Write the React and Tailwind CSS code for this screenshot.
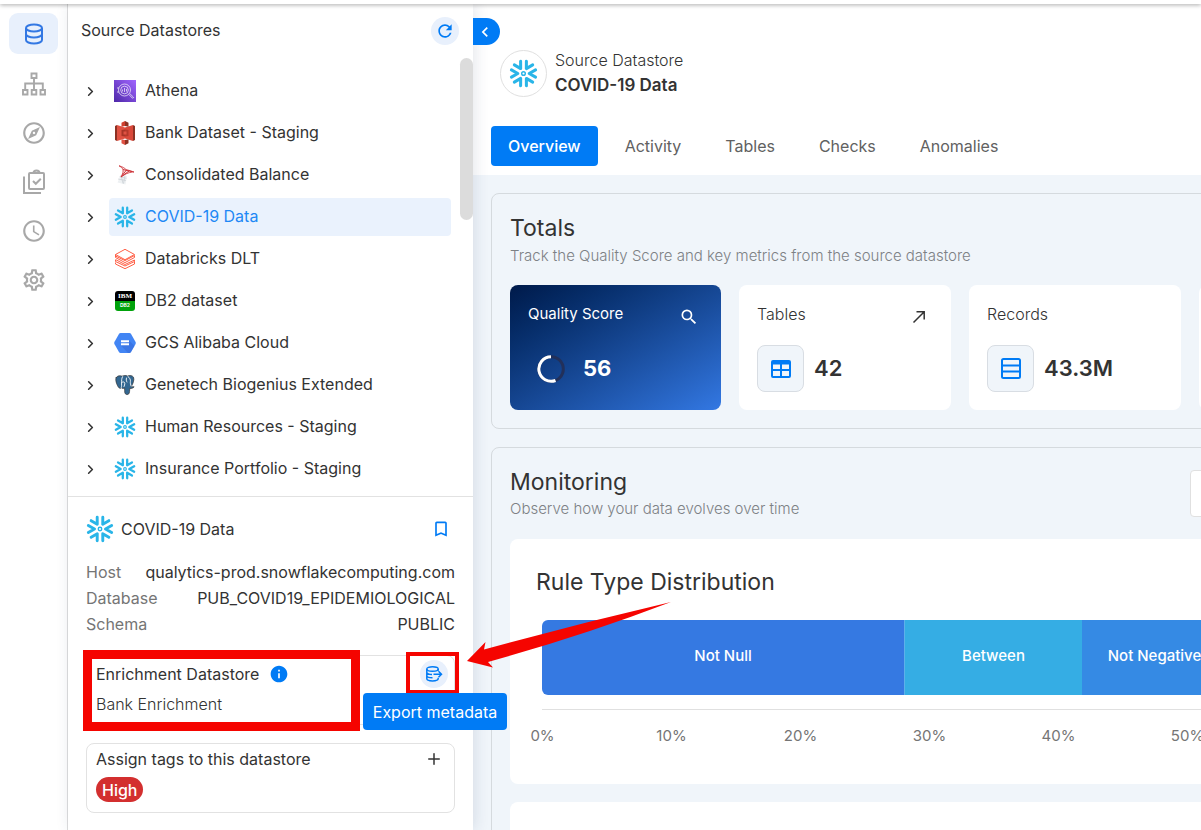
import {
  MdChevronLeft, MdRefresh, MdBookmarkBorder, MdInfo, MdSearch,
  MdOutlineExplore, MdOutlineWatchLater, MdOutlineSettings,
} from 'react-icons/md';
import { ChevronRight, Plus } from 'lucide-react';
import clsx from 'clsx';

function Snowflake({ className }) {
  return (
    <svg viewBox="0 0 24 24" className={clsx('shrink-0', className)} fill="none" stroke="#29b5e8" strokeWidth="2.5" strokeLinecap="round" strokeLinejoin="round">
      {[0, 60, 120, 180, 240, 300].map(a => (
        <path key={a} d="M2 9 7.3 12 2 15" transform={`rotate(${a} 12 12)`} />
      ))}
      <circle cx="12" cy="12" r="1.5" strokeWidth="1.2" />
    </svg>
  );
}

function AthenaLogo() {
  return (
    <svg viewBox="0 0 22 22" className="size-[22px] shrink-0" fill="none" stroke="#fff">
      <defs>
        <linearGradient id="athena" x1="0" y1="1" x2="1" y2="0">
          <stop offset="0" stopColor="#4d27a8" />
          <stop offset="1" stopColor="#a166ff" />
        </linearGradient>
      </defs>
      <path d="M0 0h22v22H0z" fill="url(#athena)" stroke="none" />
      <g strokeWidth="0.8" opacity="0.85">
        <circle cx="10.5" cy="10" r="6" />
        <circle cx="10.5" cy="10" r="3.8" />
        <path d="M8.5 11.5v-2M10.5 12V8M12.5 11.5V9M3 8h2M3 12h2" />
        <path d="m14.8 14.4 3.4 3.6c.7.7 1.8-.3 1.1-1l-3.6-3.5" />
      </g>
    </svg>
  );
}

function S3Logo() {
  return (
    <svg viewBox="0 0 22 24" className="h-6 w-[22px] shrink-0">
      <path d="M1 5l2-1v16l-2-1z" fill="#8c3123" />
      <path d="M3 4 11 6.500v11L3 20z" fill="#e05243" />
      <path d="M21 5l-2-1v16l2-1z" fill="#8c3123" />
      <path d="M19 4 11 6.500v11l8 2.500z" fill="#d9483a" />
      <path d="M11 0 7.500 1.700v4L11 5z" fill="#d0402f" />
      <path d="m11 0 3.500 1.700v4L11 5z" fill="#8c3123" />
      <path d="m11 24-3.500-1.700v-4L11 19z" fill="#e05243" />
      <path d="m11 24 3.500-1.700v-4L11 19z" fill="#8c3123" />
      <path d="M11 8.500 7.500 9v6l3.500.5z" fill="#a83427" />
      <path d="m11 8.500 3.500.5v6l-3.500.5z" fill="#b5382b" />
      <path d="M9.500 10.500h3v3h-3z" fill="#e05243" />
    </svg>
  );
}

function SqlServerLogo() {
  return (
    <svg viewBox="0 0 22 22" className="size-[22px] shrink-0">
      <path d="M7 10.500 13 12l-1.500 8.500-8-2z" fill="#eef1f3" />
      <path d="M4 15l8 1.500M7 11l2 8.500M11 11.500l-1.500 8M5.500 12.800 12.500 14.300" stroke="#c3cacf" strokeWidth="0.6" fill="none" />
      <path d="M5 1.800c3.600 1 5.600 2.200 7 3.800 2.800.6 5.500 1.400 8 2.400-3.500 0-8 1.200-13 5 1.700-3.200 2.700-5.500 1.800-7.700C8.200 3.800 6.800 2.800 5 1.800z" fill="#fbe9e9" stroke="#c9252b" strokeWidth="0.800" />
      <path d="m9 5.500 9 2.200M8.500 11l4-5M7.500 12.500 15 7" stroke="#c9252b" strokeWidth="0.900" fill="none" />
    </svg>
  );
}

function DatabricksLogo() {
  return (
    <svg viewBox="0 0 22 22" className="size-[22px] shrink-0" fill="none" stroke="#ff5f46" strokeWidth="1" strokeLinejoin="round">
      <path d="M1.500 6.500 11 1.300l9.500 5.200L11 11.700z" />
      <path d="M1.500 6.500v3L11 14.600l9.500-5.100v-2L11 12.600 1.500 8" />
      <path d="M1.500 12v1.500L11 18l9.500-4.500V12L11 16.500 1.500 11.500" />
      <path d="M1.500 14.500V16L11 20.700l9.500-4.700v-2.500" />
    </svg>
  );
}

function Db2Logo() {
  return (
    <div className="mx-px flex size-5 shrink-0 flex-col overflow-hidden rounded-[3px] text-center text-white">
      <span className="h-[10px] bg-black font-['Liberation_Serif',serif] text-[7px] leading-[11px] font-bold">IBM</span>
      <span className="h-[10px] bg-[#00a20b] text-[5px] leading-[8px] font-bold">DB2</span>
    </div>
  );
}

function GcsLogo() {
  return (
    <svg viewBox="0 0 22 20" className="h-5 w-[22px] shrink-0">
      <path d="M6.500 0h9c.6 0 1.100.3 1.400.8l4.700 8.200c.3.600.3 1.300 0 1.900l-4.700 8.300c-.3.500-.8.800-1.400.8h-9c-.6 0-1.100-.3-1.400-.8L.4 10.900c-.3-.6-.3-1.300 0-1.900L5.100.8c.3-.5.800-.8 1.400-.8z" fill="#4285f4" />
      <path d="m15 7.500 5.500 5.500-4 6.500c-.2.300-.6.500-1 .5H14l-7-7.500z" fill="#3367d6" opacity="0.5" />
      <path d="M7 7.300h8v2H7zM7 10.300h8v2H7z" fill="#fff" />
    </svg>
  );
}

function PostgresLogo() {
  return (
    <svg viewBox="0 0 22 22" className="size-[22px] shrink-0" strokeLinejoin="round" strokeLinecap="round">
      <path d="M2.200 3.500C3.500 1.500 6 1.500 8 2.200c2-.9 4-.8 5.500-.2 2-.8 4.800-.7 6 1.200 1 2.400-.4 6.500-2.200 9.300.8.400 2 .2 2.800.3-.5 1.300-2.800 1.900-4.300 1.600-.3 2 .1 4.600-1.400 5.800-1.300.8-3.300.2-3.600-1.500-.3-1.500-.1-3.200-.2-4.700-1.200.7-2.500.6-3.300-.3-.8 1-2 .8-3-.7C2.400 10 1 5.500 2.200 3.500z" fill="#336791" stroke="#333" strokeWidth="0.700" />
      <path d="M7.300 13.500c.6-1.500.1-3 .3-4.800.1-2-.2-4 .9-6M13.800 2.300c2 1.500 2.900 3.500 2.600 5.200-.3 1.800.2 2.800.7 4.500M7.600 8.500c1.500-1 3-.7 3.200.7.100 1.300-.4 2.200-.8 3.300M12.500 4c-.5 1.500-.2 3 .4 4" fill="none" stroke="#fff" strokeWidth="0.900" />
    </svg>
  );
}

function SitemapIcon() {
  return (
    <svg viewBox="0 0 26 24" className="h-6 w-[26px]" fill="none" stroke="currentColor" strokeWidth="1.900">
      <path d="M10.500 1.500h5v4.500h-5zM2 18h4.500v4.500H2zM10.700 18h4.600v4.500h-4.600zM19.500 18H24v4.500h-4.500zM13 6v12M4.200 18v-6.500h17.600V18" />
    </svg>
  );
}

function DatabaseIcon() {
  return (
    <svg viewBox="0 0 20 22" className="h-[22px] w-5" fill="none" stroke="#3378e3" strokeWidth="2">
      <ellipse cx="10" cy="5" rx="8" ry="3.500" />
      <path d="M2 5v12c0 2 3.600 3.500 8 3.500s8-1.500 8-3.500V5M2 11c0 2 3.600 3.500 8 3.500s8-1.500 8-3.500" />
    </svg>
  );
}

function ChecksIcon() {
  return (
    <svg viewBox="0 0 24 26" className="h-[26px] w-6" fill="none" stroke="currentColor" strokeWidth="2">
      <path d="M2 7.500V24h17" />
      <rect x="7" y="4" width="15" height="16" rx="1" />
      <path d="M11.500 4c0-3.500 6-3.500 6 0M11 12l2.800 2.800 5-5" />
    </svg>
  );
}

function ExportIcon() {
  return (
    <svg viewBox="0 0 18 18" className="size-[18px]" fill="none" stroke="currentColor" strokeWidth="1.500">
      <ellipse cx="7.500" cy="4" rx="5.700" ry="2.300" />
      <path d="M1.800 4v9.500c0 1.400 2.500 2.400 5.700 2.400s5.700-1 5.700-2.400v-.8M13.200 4v1.800M1.800 7.200c0 1.300 2.200 2.200 5.200 2.300M1.800 10.500c0 1.300 2.500 2.300 5.700 2.300" />
      <path d="M8.500 9.300h8M13.500 6.300l3 3-3 3" />
    </svg>
  );
}

function OpenIcon() {
  return (
    <svg viewBox="0 0 14 14" className="size-[14px]" fill="none" stroke="currentColor" strokeWidth="1.500">
      <path d="M1.500 12.500 12 2M4.500 1.800h7.700v7.700" />
    </svg>
  );
}

function TableIcon() {
  return (
    <svg viewBox="0 0 20 18" className="h-[18px] w-5" fill="none" stroke="#007bf5" strokeWidth="2">
      <rect x="1" y="1" width="18" height="16" rx="1" />
      <path d="M1 10h18M10 3v14" />
      <path d="M1 3h18" strokeWidth="3" />
    </svg>
  );
}

function RecordsIcon() {
  return (
    <svg viewBox="0 0 20 21" className="h-[21px] w-5" fill="none" stroke="#007bf5" strokeWidth="2">
      <rect x="1" y="1" width="18" height="19" rx="1.500" />
      <path d="M1 7.500h18M1 13.500h18" />
    </svg>
  );
}

const navItems = [
  { label: 'Datastores', icon: <DatabaseIcon />, active: true },
  { label: 'Lineage',    icon: <SitemapIcon /> },
  { label: 'Explore',    icon: <MdOutlineExplore className="size-[26px]" /> },
  { label: 'Checks',     icon: <ChecksIcon /> },
  { label: 'History',    icon: <MdOutlineWatchLater className="size-[26px]" /> },
  { label: 'Settings',   icon: <MdOutlineSettings className="size-[26px]" /> },
];

const datastores = [
  { name: 'Athena',                        logo: <AthenaLogo /> },
  { name: 'Bank Dataset - Staging',        logo: <S3Logo /> },
  { name: 'Consolidated Balance',          logo: <SqlServerLogo /> },
  { name: 'COVID-19 Data',                 logo: <Snowflake className="size-[22px]" />, active: true },
  { name: 'Databricks DLT',                logo: <DatabricksLogo /> },
  { name: 'DB2 dataset',                   logo: <Db2Logo /> },
  { name: 'GCS Alibaba Cloud',             logo: <GcsLogo /> },
  { name: 'Genetech Biogenius Extended',   logo: <PostgresLogo /> },
  { name: 'Human Resources - Staging',     logo: <Snowflake className="size-[22px]" /> },
  { name: 'Insurance Portfolio - Staging', logo: <Snowflake className="size-[22px]" /> },
];

const details = [
  { label: 'Host',     value: 'qualytics-prod.snowflakecomputing.com' },
  { label: 'Database', value: 'PUB_COVID19_EPIDEMIOLOGICAL' },
  { label: 'Schema',   value: 'PUBLIC' },
];

const tabs = ['Overview', 'Activity', 'Tables', 'Checks', 'Anomalies'];

const ticks = ['0%', '10%', '20%', '30%', '40%', '50%'];

function NavRail() {
  return (
    <nav className="flex w-[68px] shrink-0 flex-col items-center gap-2 border-r border-[#dedede] pt-[9px]">
      {navItems.map(n => (
        <button
          key={n.label}
          aria-label={n.label}
          className={clsx(
            'flex h-[41px] w-[49px] items-center justify-center rounded-[9px] text-[#a8a8a8]',
            n.active && 'mb-px bg-[#e8f0fc]'
          )}
        >
          {n.icon}
        </button>
      ))}
    </nav>
  );
}

function DatastorePanel() {
  return (
    <aside className="z-10 flex w-[405px] shrink-0 flex-col bg-white shadow-[2px_0_14px_rgba(30,50,90,0.12)]">
      <div className="flex h-[54px] items-center justify-between pr-[14px] pl-[13px]">
        <h2 className="pb-0.5">Source Datastores</h2>
        <button aria-label="Refresh" className="flex size-7 items-center justify-center rounded-full bg-[#e8f0fc] text-[#007bf5]">
          <MdRefresh className="size-5" />
        </button>
      </div>

      <div className="flex h-[439px] items-start justify-between border-b border-[#e2e2e2] pl-3">
        <ul className="flex flex-1 flex-col gap-1 pt-[14px] pr-[9px]">
          {datastores.map(d => (
            <li key={d.name} className="flex items-center gap-1">
              <button aria-label={`Expand ${d.name}`} className="flex w-[25px] items-center justify-start pl-[3px]">
                <ChevronRight className="size-[15px]" strokeWidth={2.5} />
              </button>
              <button
                className={clsx(
                  'flex h-[38px] flex-1 items-center gap-[9px] rounded-[4px] px-[5px] text-left',
                  d.active && 'bg-[#eaf2fd] text-[#1e88f5]'
                )}
              >
                {d.logo}
                <span className="pb-0.5">{d.name}</span>
              </button>
            </li>
          ))}
        </ul>
        <div className="h-[162px] w-[13px] rounded-full bg-[#dcdcdc]" />
      </div>

      <div className="flex flex-col px-[18px] pt-[18px]">
        <div className="flex items-center gap-[7px]">
          <Snowflake className="size-7" />
          <span className="flex-1">COVID-19 Data</span>
          <button aria-label="Bookmark" className="mr-1 text-[#007bf5]">
            <MdBookmarkBorder className="size-5" />
          </button>
        </div>

        <dl className="mt-4">
          {details.map(d => (
            <div key={d.label} className="flex h-[26px] items-center justify-between">
              <dt className="text-[#757575]">{d.label}</dt>
              <dd>{d.value}</dd>
            </div>
          ))}
        </dl>

        <section className="relative mt-[18px] flex h-[70px] justify-between rounded-lg border border-[#e2e2e2] px-[9px] pt-1">
          <div>
            <div className="flex h-7 items-center gap-[10px]">
              Enrichment Datastore
              <MdInfo className="size-5 text-[#007bf5]" />
            </div>
            <p className="leading-8 font-light">Bank Enrichment</p>
          </div>
          <button aria-label="Export metadata" className="mr-[-3px] flex size-7 items-center justify-center rounded-full bg-[#e8f0fc] text-[#007bf5]">
            <ExportIcon />
          </button>
          <div className="absolute top-[-6px] left-[-4px] h-[81px] w-[277px] border-9 border-[#f50400]" />
          <div className="absolute top-[-4px] right-[-5px] h-[42px] w-[53px] border-4 border-[#f50400]" />
          <div role="tooltip" className="absolute top-[37px] left-[276px] flex h-[37px] w-36 items-center justify-center rounded bg-[#007bf5] whitespace-nowrap text-white">
            Export metadata
          </div>
          <svg viewBox="0 0 206 70" className="absolute top-[-56px] left-[380px] z-20 h-[70px] w-[206px]" fill="#f50400">
            <path d="M204 2 Q110 24 17 49.500L18.500 42 0 61l26 6.500-5-5.500Q115 36 204 2z" />
          </svg>
        </section>

        <section className="mt-[18px] h-[70px] rounded-lg border border-[#e2e2e2] px-[9px] pt-[3px]">
          <div className="flex items-center justify-between">
            Assign tags to this datastore
            <button aria-label="Add tag" className="mr-0.5">
              <Plus className="size-[18px]" strokeWidth={2} />
            </button>
          </div>
          <span className="mt-[6px] inline-flex h-[25px] items-center rounded-full bg-[#d32f2f] px-[6px] font-medium text-white">High</span>
        </section>
      </div>
    </aside>
  );
}

function StatCard({ title, icon, value, action }) {
  return (
    <div className="h-[125px] w-[212px] shrink-0 rounded-lg bg-white px-[18px] pt-[15px]">
      <div className="flex h-7 items-center justify-between">
        <span className="font-light">{title}</span>
        {action}
      </div>
      <div className="mt-[17px] flex items-center gap-[10px]">
        <span className="flex size-[47px] items-center justify-center rounded-lg border border-[#d8dde3] bg-[#f0f5fa]">{icon}</span>
        <span className="text-[22px] font-semibold">{value}</span>
      </div>
    </div>
  );
}

function Totals() {
  return (
    <section className="h-[236px] w-[960px] shrink-0 rounded-lg border border-[#d5dade] px-[18px] pt-[18px]">
      <h2 className="text-[23px] leading-8">Totals</h2>
      <p className="text-[15px] leading-6 font-light text-[#7d8185]">Track the Quality Score and key metrics from the source datastore</p>
      <div className="mt-[17px] flex gap-[18px]">
        <div className="h-[125px] w-[211px] shrink-0 rounded-lg bg-linear-to-br from-[#001a4a] to-[#3378e3] px-[18px] pt-[15px] text-white">
          <div className="flex h-7 items-center justify-between">
            <span className="text-[15px]">Quality Score</span>
            <button aria-label="Quality score details" className="mt-[6px] mr-1">
              <MdSearch className="size-5" stroke="currentColor" />
            </button>
          </div>
          <div className="mt-[17px] flex h-[47px] items-center gap-[18px] pl-[9px]">
            <svg viewBox="0 0 28 28" className="size-7" fill="none" strokeWidth="3">
              <circle cx="14" cy="14" r="12.300" stroke="#22305a" />
              <path d="M14 1.700A12.300 12.300 0 1 0 18.500 25.500" stroke="#fff" />
            </svg>
            <span className="text-[22px] font-bold">56</span>
          </div>
        </div>
        <StatCard title="Tables" icon={<TableIcon />} value="42" action={
          <button aria-label="Open tables" className="mt-[6px] mr-[7px]"><OpenIcon /></button>
        } />
        <StatCard title="Records" icon={<RecordsIcon />} value="43.3M" />
        <StatCard />
      </div>
    </section>
  );
}

function Monitoring() {
  return (
    <section className="w-[960px] shrink-0 rounded-lg border border-[#d5dade] px-[18px] pt-[18px] pb-5">
      <div className="flex items-start justify-between">
        <div>
          <h2 className="text-[23px] leading-8">Monitoring</h2>
          <p className="text-[15px] leading-[22px] font-light text-[#7d8185]">Observe how your data evolves over time</p>
        </div>
        <select aria-label="Timeframe" className="mt-1 h-[47px] w-[242px] appearance-none rounded border border-[#e0e0e0] bg-white" />
      </div>
      <div className="mt-[19px] h-[245px] rounded-lg bg-white px-[26px] pt-[27px]">
        <h3 className="text-[23px] leading-8">Rule Type Distribution</h3>
        <div className="mt-[22px] ml-[6px] flex h-[75px] overflow-hidden rounded-md text-[15px] font-medium text-white">
          <div className="flex w-[362px] shrink-0 items-center justify-center bg-[#3579e2] pb-0.5">Not Null</div>
          <div className="flex w-[178px] shrink-0 items-center justify-center border-l border-[#5db0ea] bg-[#35ade4] pb-0.5">Between</div>
          <div className="flex w-[145px] shrink-0 items-center justify-center bg-[#358ae4] pb-0.5">Not Negative</div>
          <div className="flex-1 bg-[#35ade4]" />
        </div>
        <div className="mt-[14px] ml-[6px] border-t border-[#e0e0e0]" />
        <div className="mt-[14px] -ml-[58px] flex">
          {ticks.map(t => (
            <span key={t} className="w-[129px] shrink-0 text-center text-[15px] leading-6 text-[#757575]">{t}</span>
          ))}
        </div>
      </div>
      <div className="mt-[18px] h-60 rounded-lg bg-white" />
    </section>
  );
}

export default function App() {
  return (
    <div className="flex h-screen flex-col overflow-hidden bg-white font-['Inter',sans-serif] text-base text-[#333]">
      <header className="z-20 h-1 shrink-0 bg-white shadow-[0_1px_4px_rgba(0,0,0,0.35)]" />
      <div className="flex min-h-0 flex-1">
        <NavRail />
        <DatastorePanel />
        <main className="flex min-w-0 flex-1 flex-col overflow-hidden">
          <header className="relative flex h-[171px] shrink-0 flex-col justify-between px-[18px] pt-11 pb-[9px]">
            <button aria-label="Collapse panel" className="absolute top-[14px] left-0 z-20 flex h-[27px] w-[27px] items-center justify-center rounded-r-full bg-[#007bf5] text-white">
              <MdChevronLeft className="mr-1 size-5" stroke="currentColor" />
            </button>
            <div className="flex items-center gap-2 pl-[9px]">
              <span className="flex size-[47px] items-center justify-center rounded-full border border-[#e0e0e0]">
                <Snowflake className="size-[29px]" />
              </span>
              <div>
                <p className="leading-[25px] font-light">Source Datastore</p>
                <h1 className="text-[17px] leading-[25px] font-semibold">COVID-19 Data</h1>
              </div>
            </div>
            <nav className="flex gap-[10px]">
              {tabs.map((t, i) => (
                <button
                  key={t}
                  className={clsx(
                    'h-10 rounded px-[17px]',
                    i === 0 ? 'bg-[#007bf5] font-medium text-white' : 'text-[#616161]'
                  )}
                >
                  {t}
                </button>
              ))}
            </nav>
          </header>
          <div className="flex min-h-0 flex-1 flex-col gap-[18px] overflow-hidden bg-[#f0f5fa] py-[18px] pl-[18px]">
            <Totals />
            <Monitoring />
          </div>
        </main>
      </div>
    </div>
  );
}
